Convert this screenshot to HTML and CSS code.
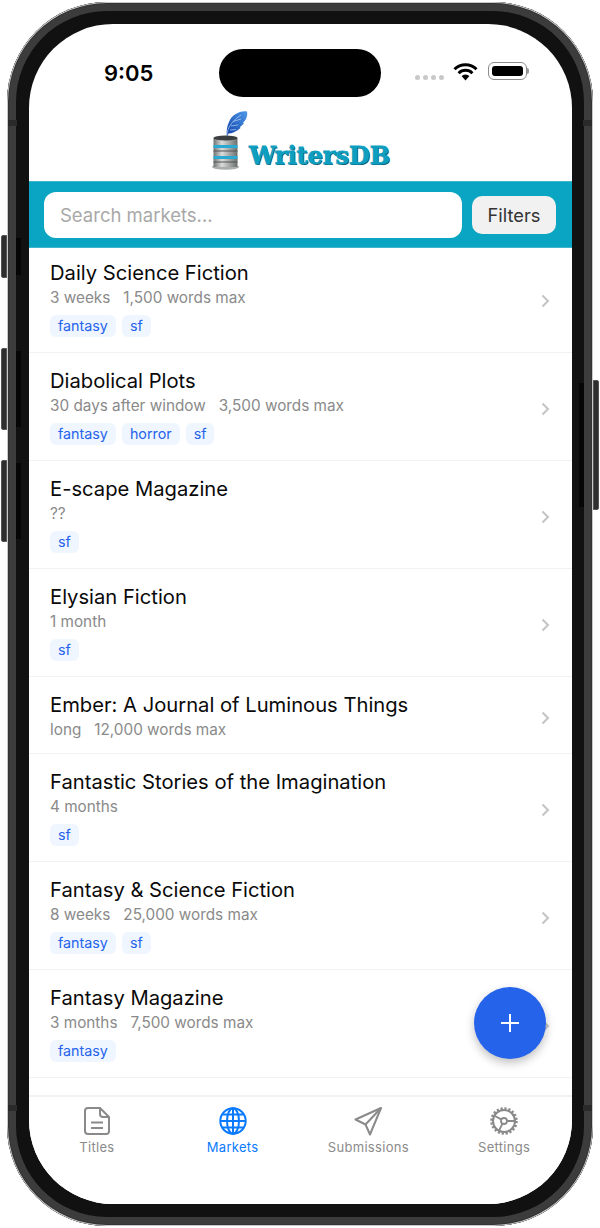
FILE: index.html
```html
<!DOCTYPE html>
<html>
  <head>
    <title>WritersDB Markets</title>
    <link rel="stylesheet" href="styles.css">
  </head>
  <body>
    <div class="phone">
      <!-- side buttons -->
      <div class="side-btn btn-silent"></div>
      <div class="side-btn btn-up"></div>
      <div class="side-btn btn-down"></div>
      <div class="side-btn btn-power"></div>
      <!-- antenna bands -->
      <div class="band band-left-top"></div>
      <div class="band band-right-top"></div>
      <div class="band band-left-bottom"></div>
      <div class="band band-right-bottom"></div>

      <div class="screen">
        <div class="status">
          <span class="time">9:05</span>
          <div class="island"></div>
          <div class="status-icons">
            <div class="dots"><i></i><i></i><i></i><i></i></div>
            <svg class="wifi" width="25" height="19" viewBox="0 0 25 19">
              <path d="M1.500 7.200a15.600 15.600 0 0 1 22 0" fill="none" stroke="#000" stroke-width="3"/>
              <path d="M5.600 11.200a9.800 9.800 0 0 1 13.800 0" fill="none" stroke="#000" stroke-width="3"/>
              <path d="M8.600 14.100a5.500 5.500 0 0 1 7.800 0L12.500 18.400z" fill="#000"/>
            </svg>
            <div class="battery"><div class="battery-fill"></div></div>
            <div class="battery-cap"></div>
          </div>
        </div>

        <div class="logo">
          <svg width="38" height="62" viewBox="0 0 38 62">
            <defs>
              <linearGradient id="steel" x1="0" x2="1" y1="0" y2="0">
                <stop offset="0" stop-color="#6f7473"/>
                <stop offset="0.35" stop-color="#d9dcdb"/>
                <stop offset="1" stop-color="#6a6f6e"/>
              </linearGradient>
              <linearGradient id="quill" x1="0" x2="1" y1="1" y2="0">
                <stop offset="0" stop-color="#0f3fa8"/>
                <stop offset="1" stop-color="#4f9ae8"/>
              </linearGradient>
            </defs>
            <path d="M16 28C15 21 16.500 15 19.500 10C23 5 30 1.500 36 2.500C37 7 35 11 32 14L33 14.500L29 18L29.500 19C26 22.500 21 24.500 17.500 24.500Z" fill="url(#quill)"/>
            <path d="M16 28C15.500 22 18 14 30 6M20 17L27 16M19 21L25 20.500M22 12.500L30 10" fill="none" stroke="#cfe2fa" stroke-width="0.600"/>
            <ellipse cx="14.500" cy="58" rx="13.500" ry="2.800" fill="#a9adac"/>
            <rect x="2.500" y="29" width="24" height="29" fill="url(#steel)"/>
            <ellipse cx="14.500" cy="29" rx="12" ry="2.600" fill="#3b3f3f"/>
            <rect x="2.500" y="36" width="24" height="3" fill="#2ba9d0"/>
            <rect x="2.500" y="47" width="24" height="3" fill="#2ba9d0"/>
            <rect x="2.500" y="41.500" width="24" height="1" fill="#555"/>
            <rect x="2.500" y="52.500" width="24" height="1" fill="#555"/>
          </svg>
          <span class="logo-text">WritersDB</span>
        </div>

        <div class="searchbar">
          <input class="search" type="text" placeholder="Search markets...">
          <button class="filters">Filters</button>
        </div>

        <div class="list">
          <div class="rows">
            <div class="row">
              <div class="row-main">
                <div class="title">Daily Science Fiction</div>
                <div class="meta"><span>3 weeks</span><span>1,500 words max</span></div>
                <div class="tags"><span class="tag">fantasy</span><span class="tag">sf</span></div>
              </div>
              <svg class="chevron" width="9" height="14" viewBox="0 0 9 14"><path d="M1.500 1.500L7 7L1.500 12.500"/></svg>
            </div>
            <div class="row">
              <div class="row-main">
                <div class="title">Diabolical Plots</div>
                <div class="meta"><span>30 days after window</span><span>3,500 words max</span></div>
                <div class="tags"><span class="tag">fantasy</span><span class="tag">horror</span><span class="tag">sf</span></div>
              </div>
              <svg class="chevron" width="9" height="14" viewBox="0 0 9 14"><path d="M1.500 1.500L7 7L1.500 12.500"/></svg>
            </div>
            <div class="row">
              <div class="row-main">
                <div class="title">E-scape Magazine</div>
                <div class="meta"><span>??</span></div>
                <div class="tags"><span class="tag">sf</span></div>
              </div>
              <svg class="chevron" width="9" height="14" viewBox="0 0 9 14"><path d="M1.500 1.500L7 7L1.500 12.500"/></svg>
            </div>
            <div class="row">
              <div class="row-main">
                <div class="title">Elysian Fiction</div>
                <div class="meta"><span>1 month</span></div>
                <div class="tags"><span class="tag">sf</span></div>
              </div>
              <svg class="chevron" width="9" height="14" viewBox="0 0 9 14"><path d="M1.500 1.500L7 7L1.500 12.500"/></svg>
            </div>
            <div class="row row-short">
              <div class="row-main">
                <div class="title">Ember: A Journal of Luminous Things</div>
                <div class="meta"><span>long</span><span>12,000 words max</span></div>
              </div>
              <svg class="chevron" width="9" height="14" viewBox="0 0 9 14"><path d="M1.500 1.500L7 7L1.500 12.500"/></svg>
            </div>
            <div class="row">
              <div class="row-main">
                <div class="title">Fantastic Stories of the Imagination</div>
                <div class="meta"><span>4 months</span></div>
                <div class="tags"><span class="tag">sf</span></div>
              </div>
              <svg class="chevron" width="9" height="14" viewBox="0 0 9 14"><path d="M1.500 1.500L7 7L1.500 12.500"/></svg>
            </div>
            <div class="row">
              <div class="row-main">
                <div class="title">Fantasy &amp; Science Fiction</div>
                <div class="meta"><span>8 weeks</span><span>25,000 words max</span></div>
                <div class="tags"><span class="tag">fantasy</span><span class="tag">sf</span></div>
              </div>
              <svg class="chevron" width="9" height="14" viewBox="0 0 9 14"><path d="M1.500 1.500L7 7L1.500 12.500"/></svg>
            </div>
            <div class="row">
              <div class="row-main">
                <div class="title">Fantasy Magazine</div>
                <div class="meta"><span>3 months</span><span>7,500 words max</span></div>
                <div class="tags"><span class="tag">fantasy</span></div>
              </div>
              <svg class="chevron" width="9" height="14" viewBox="0 0 9 14"><path d="M1.500 1.500L7 7L1.500 12.500"/></svg>
            </div>
          </div>
          <button class="fab">
            <svg width="20" height="20" viewBox="0 0 20 20"><path d="M10 1V19M1 10H19" stroke="#fff" stroke-width="2"/></svg>
          </button>
        </div>

        <div class="tabbar">
          <div class="tab">
            <svg width="28" height="30" viewBox="0 0 28 30" fill="none" stroke="#8a8a8a" stroke-width="2" stroke-linejoin="round">
              <path d="M5 2H17L26 11V25.500A2.500 2.500 0 0 1 23.500 28H5A3 3 0 0 1 2 25V5A3 3 0 0 1 5 2Z"/>
              <path d="M17 2V8A3 3 0 0 0 20 11H26"/>
              <path d="M8 16.500H20M8 22H20"/>
            </svg>
            <span>Titles</span>
          </div>
          <div class="tab active">
            <svg width="28" height="30" viewBox="0 0 28 30" fill="none" stroke="#0a7aff" stroke-width="2">
              <circle cx="14" cy="15" r="12.700"/>
              <ellipse cx="14" cy="15" rx="6" ry="12.700"/>
              <path d="M14 2.300V27.700M1.300 15H26.700M3.200 8.500H24.800M3.200 21.500H24.800"/>
            </svg>
            <span>Markets</span>
          </div>
          <div class="tab">
            <svg width="28" height="30" viewBox="0 0 28 30" fill="none" stroke="#8a8a8a" stroke-width="2" stroke-linejoin="round">
              <path d="M27 2L1.500 13.500L11.500 18.500L16 28.500Z"/>
              <path d="M27 2L11.500 18.500"/>
            </svg>
            <span>Submissions</span>
          </div>
          <div class="tab">
            <svg width="28" height="30" viewBox="0 0 28 30" fill="none" stroke="#8a8a8a">
              <circle cx="14" cy="15" r="11" stroke-width="2"/>
              <circle cx="14" cy="15" r="12.500" stroke-width="2.500" stroke-dasharray="2.200 1.730"/>
              <circle cx="14" cy="15" r="3" stroke-width="1.800"/>
              <path d="M11.200 13.400L5 10M16.800 15H25M12.500 17.600L9 24.500" stroke-width="1.800"/>
            </svg>
            <span>Settings</span>
          </div>
        </div>
      </div>
    </div>
  </body>
</html>
```

FILE: styles.css
```css
* {
  box-sizing: border-box;
}

body {
  margin: 0;
  background: #fff;
  font-family: Inter, "Noto Sans", sans-serif;
}

.phone {
  position: relative;
  width: 586px;
  height: 1224px;
  margin: 2px 0 0 7px;
  padding: 22px 21px 22px 22px;
  background: #111;
  border-radius: 100px;
  box-shadow: inset 0 0 0 1px #c9c9c9, inset 0 0 0 2px #333, inset 0 0 0 9px #3c3c3c;
}

.side-btn {
  position: absolute;
  width: 6px;
  background: #2e2e2e;
  border: 1px solid #555;
}

.side-btn::after {
  content: "";
  position: absolute;
  top: 2px;
  bottom: 2px;
  width: 5px;
  background: #050505;
}

.btn-silent,
.btn-up,
.btn-down {
  left: -6px;
  border-radius: 2px 0 0 2px;
}

.btn-silent::after,
.btn-up::after,
.btn-down::after {
  left: 14px;
}

.btn-silent {
  top: 233px;
  height: 43px;
}

.btn-up {
  top: 346px;
  height: 82px;
}

.btn-down {
  top: 458px;
  height: 82px;
}

.btn-power {
  right: -6px;
  top: 378px;
  height: 130px;
  border-radius: 0 2px 2px 0;
}

.btn-power::after {
  right: 14px;
}

.band {
  position: absolute;
  background: #2a2a2a;
}

.band-left-top,
.band-right-top {
  top: 118px;
  width: 9px;
  height: 6px;
}

.band-left-bottom,
.band-right-bottom {
  top: 1103px;
  width: 9px;
  height: 6px;
}

.band-left-top,
.band-left-bottom {
  left: 1px;
}

.band-right-top,
.band-right-bottom {
  right: 1px;
}

.screen {
  display: flex;
  flex-direction: column;
  height: 100%;
  background: #fff;
  border-radius: 84px;
  overflow: hidden;
}

/* status bar */
.status {
  display: flex;
  align-items: center;
  height: 48px;
  margin-top: 25px;
  padding-left: 75px;
}

.time {
  width: 115px;
  font-size: 22px;
  font-weight: 600;
  color: #000;
}

.island {
  width: 162px;
  height: 48px;
  background: #000;
  border-radius: 24px;
}

.status-icons {
  display: flex;
  align-items: center;
  height: 20px;
  margin-top: -4px;
  margin-left: 34px;
}

.dots {
  display: flex;
  gap: 3px;
  margin-top: 13px;
  margin-right: 9px;
}

.dots i {
  width: 5px;
  height: 5px;
  background: #c8c8c8;
  border-radius: 50%;
}

.wifi {
  margin-right: 10px;
}

.battery {
  width: 39px;
  height: 18px;
  padding: 3px;
  border: 1.500px solid #8c8c8c;
  border-radius: 6px;
}

.battery-fill {
  height: 100%;
  background: #000;
  border-radius: 3px;
}

.battery-cap {
  width: 2px;
  height: 6px;
  background: #999;
  border-radius: 0 2px 2px 0;
}

/* logo */
.logo {
  display: flex;
  align-items: flex-end;
  justify-content: center;
  height: 84px;
  padding-bottom: 10px;
}

.logo-text {
  font-family: "DejaVu Serif", serif;
  font-size: 24px;
  font-weight: 700;
  line-height: 30px;
  color: #0e9fc0;
  text-shadow: 1px 1px 0 #14546b;
  -webkit-text-stroke: 0.8px #0e9fc0;
}

/* search */
.searchbar {
  display: flex;
  align-items: center;
  gap: 10px;
  height: 67px;
  padding: 0 16px 0 15px;
  background: #0aa5c2;
  border-top: 1px solid #3fb6cd;
  border-bottom: 1px solid #3fb6cd;
}

.search {
  flex: 1;
  min-width: 0;
  height: 46px;
  padding: 1px 16px 0;
  font-family: inherit;
  font-size: 18.500px;
  background: #fff;
  border: none;
  border-radius: 12px;
}

.search::placeholder {
  color: #a8a8a8;
}

.filters {
  width: 84px;
  height: 38px;
  padding: 0;
  font-family: inherit;
  font-size: 18.300px;
  color: #333;
  background: #f1f1f1;
  border: none;
  border-radius: 10px;
}

/* market list */
.list {
  position: relative;
  flex: 1;
  min-height: 0;
  overflow: hidden;
}

.rows {
  margin-top: -3px;
}

.row {
  display: flex;
  align-items: center;
  justify-content: space-between;
  padding: 15px 22px 12px 21px;
  border-bottom: 1px solid #f2f2f2;
}

.row-short {
  padding-bottom: 11px;
}

.title {
  font-size: 20.200px;
  line-height: 26px;
  color: #0a0a0a;
}

.meta {
  display: flex;
  gap: 13px;
  font-size: 15.300px;
  line-height: 24px;
  color: #8a8a8a;
}

.tags {
  display: flex;
  gap: 6px;
  margin-top: 5px;
  margin-bottom: 3px;
}

.tag {
  height: 22px;
  padding: 0 8px;
  font-size: 14.300px;
  line-height: 22px;
  color: #2563eb;
  background: #eff6ff;
  border-radius: 6px;
}

.chevron {
  flex: none;
  margin-top: 2px;
  fill: none;
  stroke: #c4c4c4;
  stroke-width: 2;
}

.fab {
  position: absolute;
  right: 26px;
  top: 739px;
  display: flex;
  align-items: center;
  justify-content: center;
  width: 72px;
  height: 72px;
  padding: 0;
  background: #2563eb;
  border: none;
  border-radius: 50%;
  box-shadow: 0 4px 10px rgba(0, 0, 0, 0.25);
}

/* bottom tabs */
.tabbar {
  display: grid;
  grid-template-columns: repeat(4, 1fr);
  height: 109px;
  padding-top: 9px;
  background: #fff;
  border-top: 2px solid #f2f2f2;
}

.tab {
  display: flex;
  flex-direction: column;
  align-items: center;
  font-size: 13px;
  letter-spacing: 0.3px;
  color: #8a8a8a;
}

.tab span {
  margin-top: 2px;
  line-height: 18px;
}

.tab.active {
  color: #0a7aff;
}
```
